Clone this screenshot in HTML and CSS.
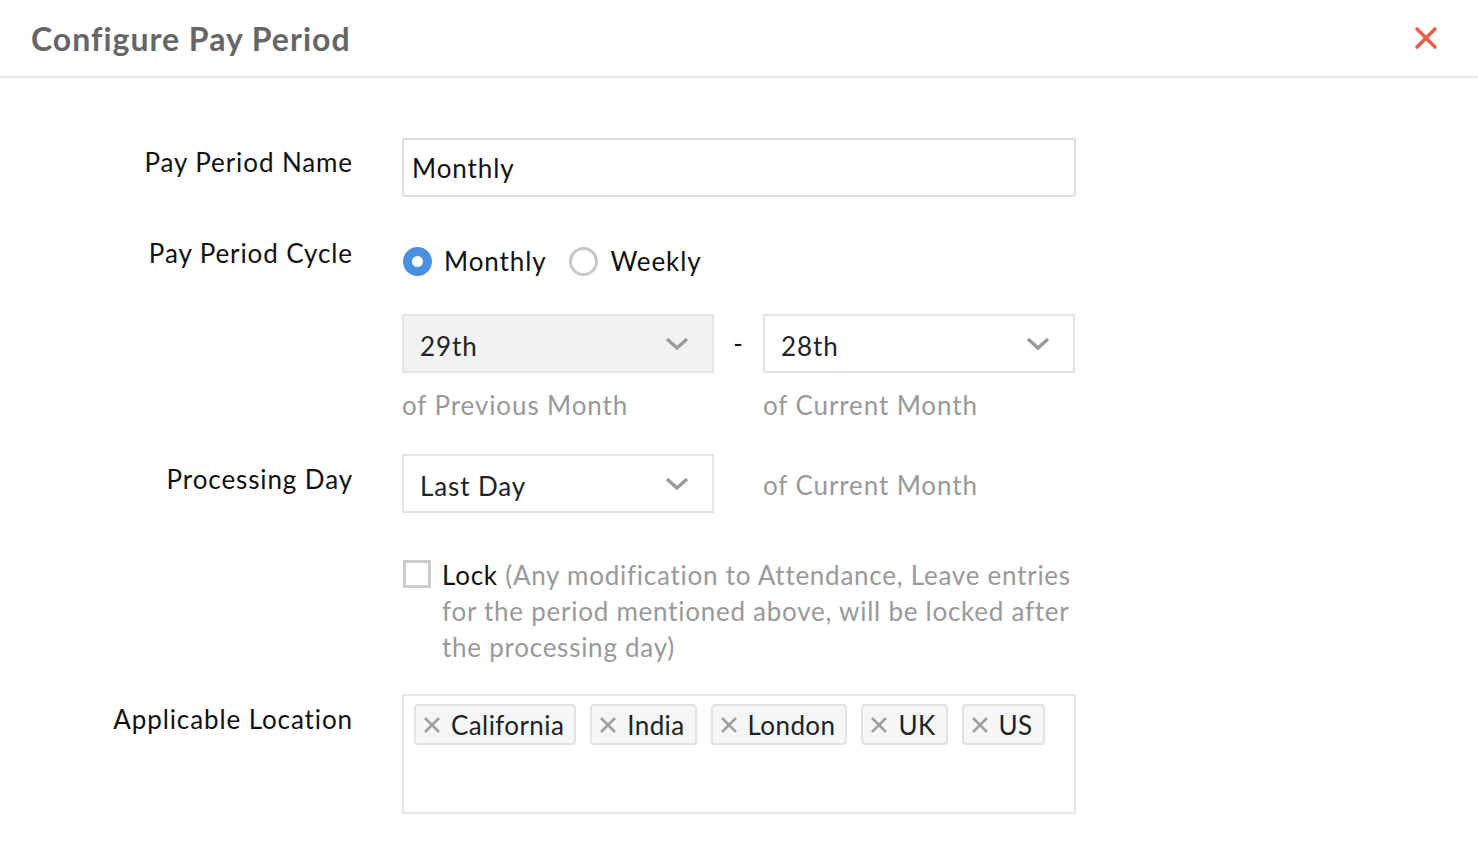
FILE: index.html
```html
<!DOCTYPE html>
<html lang="en">
<head>
  <meta charset="UTF-8">
  <title>Configure Pay Period</title>
  <link rel="stylesheet" href="styles.css">
</head>
<body>

  <div class="header">
    <h1>Configure Pay Period</h1>
    <span class="close">
      <svg width="24" height="24" viewBox="0 0 24 24"><path d="M3 3L21 21M21 3L3 21" stroke="#e9604a" stroke-width="3.6" stroke-linecap="round"/></svg>
    </span>
  </div>

  <form class="form">
    <div class="row row-name">
      <label class="label">Pay Period Name</label>
      <div class="control">
        <input type="text" class="text-input" value="Monthly">
      </div>
    </div>

    <div class="row row-cycle">
      <label class="label">Pay Period Cycle</label>
      <div class="control radios">
        <span class="radio checked"></span><span class="radio-text">Monthly</span>
        <span class="radio"></span><span class="radio-text">Weekly</span>
      </div>
    </div>

    <div class="row row-dates">
      <div class="label"></div>
      <div class="control dates">
        <div class="date-group">
          <div class="select grey">
            <span>29th</span>
            <svg class="chev" width="24" height="14" viewBox="0 0 24 14"><path d="M2 2L12 11L22 2" fill="none" stroke="#9a9a9a" stroke-width="3.5"/></svg>
          </div>
          <div class="hint">of Previous Month</div>
        </div>
        <div class="dash">-</div>
        <div class="date-group">
          <div class="select">
            <span>28th</span>
            <svg class="chev" width="24" height="14" viewBox="0 0 24 14"><path d="M2 2L12 11L22 2" fill="none" stroke="#9a9a9a" stroke-width="3.5"/></svg>
          </div>
          <div class="hint">of Current Month</div>
        </div>
      </div>
    </div>

    <div class="row row-process">
      <label class="label">Processing Day</label>
      <div class="control dates">
        <div class="date-group">
          <div class="select">
            <span>Last Day</span>
            <svg class="chev" width="24" height="14" viewBox="0 0 24 14"><path d="M2 2L12 11L22 2" fill="none" stroke="#9a9a9a" stroke-width="3.5"/></svg>
          </div>
        </div>
        <div class="dash"></div>
        <div class="date-group">
          <div class="hint inline">of Current Month</div>
        </div>
      </div>
    </div>

    <div class="row row-lock">
      <div class="label"></div>
      <div class="control lock">
        <span class="checkbox"></span>
        <p class="lock-text"><span class="lock-word">Lock</span> (Any modification to Attendance, Leave entries for the period mentioned above, will be locked after the processing day)</p>
      </div>
    </div>

    <div class="row row-location">
      <label class="label">Applicable Location</label>
      <div class="control">
        <div class="tags">
          <span class="tag"><svg class="tag-x" width="18" height="18" viewBox="0 0 18 18"><path d="M2 2L16 16M16 2L2 16" stroke="#a0a0a0" stroke-width="2.6"/></svg>California</span>
          <span class="tag"><svg class="tag-x" width="18" height="18" viewBox="0 0 18 18"><path d="M2 2L16 16M16 2L2 16" stroke="#a0a0a0" stroke-width="2.6"/></svg>India</span>
          <span class="tag"><svg class="tag-x" width="18" height="18" viewBox="0 0 18 18"><path d="M2 2L16 16M16 2L2 16" stroke="#a0a0a0" stroke-width="2.6"/></svg>London</span>
          <span class="tag"><svg class="tag-x" width="18" height="18" viewBox="0 0 18 18"><path d="M2 2L16 16M16 2L2 16" stroke="#a0a0a0" stroke-width="2.6"/></svg>UK</span>
          <span class="tag"><svg class="tag-x" width="18" height="18" viewBox="0 0 18 18"><path d="M2 2L16 16M16 2L2 16" stroke="#a0a0a0" stroke-width="2.6"/></svg>US</span>
        </div>
      </div>
    </div>
  </form>

</body>
</html>
```

FILE: styles.css
```css
body {
  margin: 0;
  font-family: Lato, "Open Sans", sans-serif;
  background-color: #fff;
  color: #111;
}

.header {
  height: 76px;
  border-bottom: 2px solid #e4e4e4;
  display: flex;
  align-items: center;
  justify-content: space-between;
  padding: 0 40px 0 31px;
}

.header h1 {
  margin: 0;
  font-size: 32px;
  font-weight: 700;
  color: #666;
  letter-spacing: 1px;
}

.close {
  display: flex;
  cursor: pointer;
}

.row {
  display: flex;
  font-size: 26px;
  letter-spacing: 0.9px;
}

.label {
  width: 353px;
  flex: none;
  text-align: right;
  line-height: 32px;
  padding-top: 9px;
  color: #111;
}

.control {
  width: 674px;
  margin-left: 49px;
}

.row-name { margin-top: 60px; }
.row-name .label { padding-top: 8px; }

.text-input {
  display: block;
  width: 100%;
  height: 59px;
  box-sizing: border-box;
  border: 2px solid #ddd;
  border-radius: 3px;
  padding: 0 8px;
  font-family: inherit;
  font-size: 26px;
  letter-spacing: 0.9px;
  color: #111;
}

.row-cycle { margin-top: 40px; }
.row-cycle .label { padding-top: 0; }

.radios {
  display: flex;
  align-items: center;
  height: 48px;
}

.radio {
  width: 29px;
  height: 29px;
  box-sizing: border-box;
  border-radius: 50%;
  border: 3px solid #c8c8c8;
  flex: none;
  margin-left: 1px;
}

.radio.checked {
  border: 9px solid #4a8fe0;
  background-color: #fff;
}

.radio-text {
  margin-left: 12px;
  margin-right: 22px;
}

.row-dates { margin-top: 29px; }
.row-dates .label, .row-lock .label { padding-top: 0; }

.dates {
  display: flex;
}

.date-group {
  width: 312px;
}

.dash {
  width: 49px;
  text-align: center;
  line-height: 59px;
  font-size: 26px;
}

.select {
  height: 59px;
  box-sizing: border-box;
  border: 2px solid #e4e4e4;
  display: flex;
  align-items: center;
  justify-content: space-between;
  padding: 0 23px 0 16px;
  color: #222;
}

.select span {
  padding-top: 5px;
}

.select.grey {
  background-color: #f2f2f2;
}

.hint {
  margin-top: 16px;
  line-height: 32px;
  color: #999;
}

.hint.inline {
  margin-top: 0;
  line-height: 62px;
}

.row-process { margin-top: 33px; }

.row-lock { margin-top: 41px; }

.lock {
  display: flex;
}

.checkbox {
  width: 28px;
  height: 28px;
  box-sizing: border-box;
  border: 3px solid #ccc;
  flex: none;
  margin-top: 3px;
  margin-left: 1px;
}

.lock-text {
  margin: 0 0 0 11px;
  line-height: 36px;
  letter-spacing: 0.75px;
  color: #999;
}

.lock-word {
  color: #111;
}

.row-location { margin-top: 29px; }

.tags {
  height: 120px;
  box-sizing: border-box;
  border: 2px solid #e6e6e6;
  padding: 8px 10px;
  display: flex;
  align-items: flex-start;
  gap: 14px;
  letter-spacing: 0.4px;
}

.tag {
  display: flex;
  align-items: center;
  height: 41px;
  box-sizing: border-box;
  border: 2px solid #e2e2e2;
  border-radius: 4px;
  background-color: #f5f6f8;
  padding: 0 10px 0 7px;
  color: #222;
}

.tag-x {
  flex: none;
  margin-right: 10px;
}
```
